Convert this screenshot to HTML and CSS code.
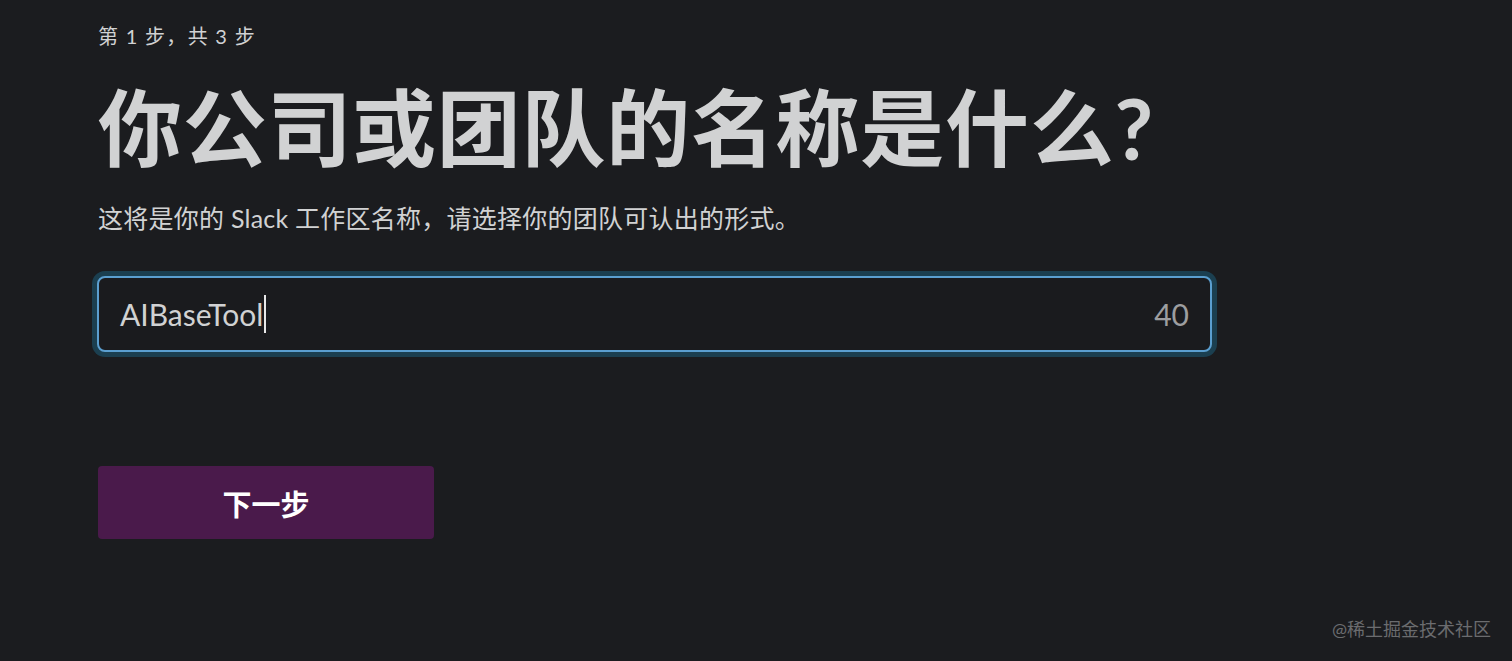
FILE: index.html
```html
<!DOCTYPE html>
<html lang="zh-CN">
<head>
  <meta charset="UTF-8" />
  <meta name="viewport" content="width=device-width, initial-scale=1.0"/>
  <title>创建工作区</title>
  <link rel="stylesheet" href="styles.css">
</head>
<body>

  <main class="setup">
    <div class="step">第 1 步，共 3 步</div>
    <h1>你公司或团队的名称是什么?</h1>
    <p class="hint">这将是你的 Slack 工作区名称，请选择你的团队可认出的形式。</p>

    <div class="field">
      <div class="field-value">AIBaseTool<span class="caret"></span></div>
      <div class="field-count">40</div>
    </div>

    <button class="next">下一步</button>
  </main>

  <footer class="mark">@稀土掘金技术社区</footer>

</body>
</html>
```

FILE: styles.css
```css
* { box-sizing: border-box; }
body {
  margin: 0; padding: 0;
  background: #1b1c1f;
  color: #d1d2d3;
  font-family: Lato, "Noto Sans CJK SC", sans-serif;
  height: 100vh; overflow: hidden;
  position: relative;
}
.setup {
  padding: 24px 0 0 98px;
  display: flex; flex-direction: column;
  align-items: flex-start;
}
.step {
  font-size: 20px; line-height: 24px;
  letter-spacing: 1.3px;
  color: #d1d2d3;
}
h1 {
  margin: 30px 0 0; font-size: 84px;
  line-height: 100px; font-weight: 700;
  color: #d1d2d3; letter-spacing: 0.7px;
}
.hint {
  margin: 24px 0 0; font-size: 25px;
  line-height: 32px; color: #d1d2d3;
  letter-spacing: 0.25px;
}
.field {
  margin-top: 42px; margin-left: -1px;
  width: 1115px; height: 76px;
  border: 2px solid #5b9fd0;
  border-radius: 8px;
  box-shadow: 0 0 0 5px rgba(29, 155, 209, 0.28);
  background: #1a1b1e;
  display: flex; align-items: center;
  justify-content: space-between;
  padding: 0 21px 0 21px;
}
.field-value {
  font-size: 30px; color: #d1d2d3;
  display: flex; align-items: center;
}
.caret {
  display: inline-block; width: 2px; height: 38px;
  background: #e8e8e8; margin-left: 1px;
}
.field-count {
  font-size: 30px; color: #9d9ea0;
}
.next {
  margin-top: 114px;
  width: 336px; height: 73px;
  background: #4a1a4b; color: #fff;
  border: none; border-radius: 4px;
  font-family: Lato, "Noto Sans CJK SC", sans-serif;
  font-size: 29px; font-weight: 700;
  cursor: pointer;
}
.mark {
  position: absolute; right: 21px; bottom: 20px;
  font-size: 18px; color: #6b6c6f;
}
```
